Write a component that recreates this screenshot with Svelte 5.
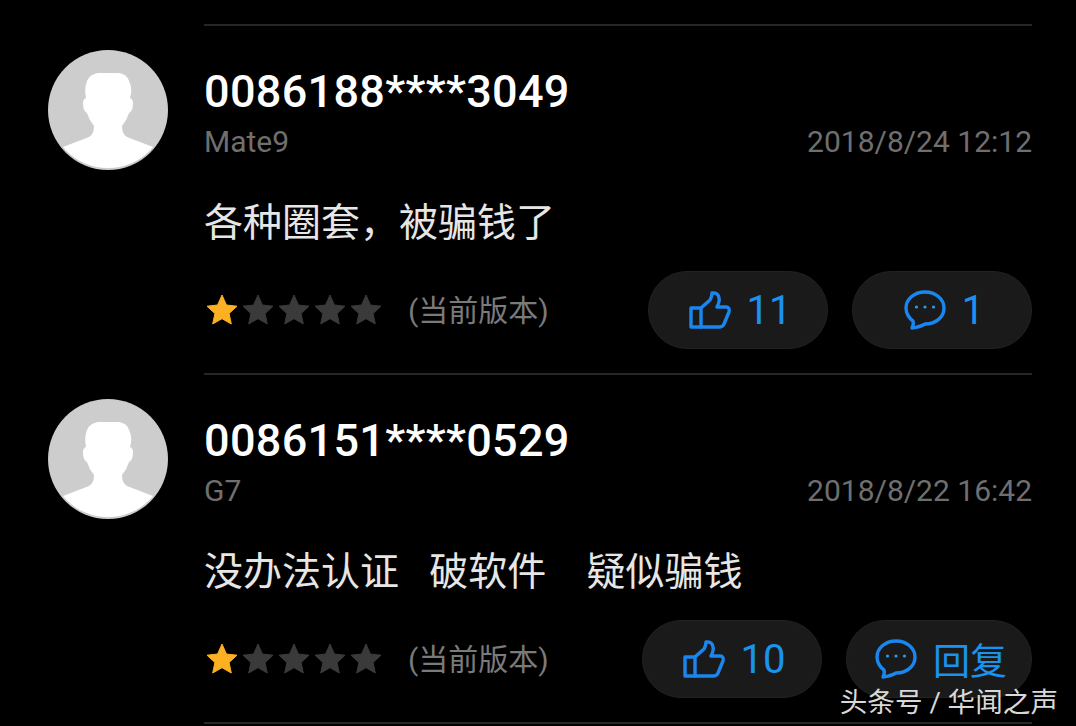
<script lang="ts">
  const reviews = [
    { name: "0086188****3049", device: "Mate9", date: "2018/8/24 12:12", text: "各种圈套，被骗钱了", likes: "11", reply: "1", replyCjk: false },
    { name: "0086151****0529", device: "G7", date: "2018/8/22 16:42", text: "没办法认证   破软件    疑似骗钱", likes: "10", reply: "回复", replyCjk: true },
  ];
  const stars = [0, 1, 2, 3, 4];
</script>

<div class="page">
  {#each reviews as r}
    <div class="review">
      <div class="avatar">
        <svg viewBox="0 0 120 120" width="120" height="120">
          <circle cx="60" cy="60" r="60" fill="#cdcdcd" />
          <path
            d="M15 97 L41 87 Q46 84 46 76 Q41 70 39 63 Q35 61 35 53 Q35 49 38 48 Q36 38 39 31 Q42 24 50 23 L71 23 Q79 24 81 31 Q85 38 82 48 Q85 49 85 53 Q85 61 81 63 Q79 70 74 76 Q74 84 79 87 L105 97 A58.500 58.500 0 0 1 15 97 Z"
            fill="#fff"
          />
        </svg>
      </div>
      <div class="body">
        <div class="name">{r.name}</div>
        <div class="meta">
          <span>{r.device}</span>
          <span>{r.date}</span>
        </div>
        <p class="text">{r.text}</p>
        <div class="foot">
          <div class="stars">
            {#each stars as i}
              <svg viewBox="0 0 36 36" width="36" height="36">
                <path
                  d="M18 3 L22.400 13 L33 14.200 L25.100 21.500 L27.300 32 L18 26.700 L8.700 32 L10.900 21.500 L3 14.200 L13.600 13 Z"
                  fill={i === 0 ? "#fdb022" : "#3a3a3a"}
                  stroke={i === 0 ? "#fdb022" : "#3a3a3a"}
                  stroke-width="1"
                  stroke-linejoin="round"
                />
              </svg>
            {/each}
          </div>
          <span class="version">(当前版本)</span>
          <div class="actions">
            <button class="pill">
              <svg viewBox="0 0 42 38" width="42" height="38" fill="none" stroke="#1a86f0" stroke-width="3.4" stroke-linejoin="round" stroke-linecap="round">
                <path d="M2 17 H12 V36 H2 Z" />
                <path d="M12 17 L21 9 Q23 6 23 2 Q29 1 30 7 Q31 10 28 16 H37 Q41 16 40 21 L35 33 Q34 36 30 36 H12" />
              </svg>
              <span class="count">{r.likes}</span>
            </button>
            <button class="pill">
              <svg viewBox="0 0 42 40" width="42" height="40">
                <path d="M21 2 C10 2 2 9.500 2 18 C2 24 6 29 9 31 Q10 34 8 38 Q16 37 21 34 C32 34 40 27 40 18 C40 9.500 32 2 21 2 Z" fill="none" stroke="#1a86f0" stroke-width="3.400" stroke-linejoin="round" />
                <circle cx="12.500" cy="17" r="1.600" fill="#2b9be8" />
                <circle cx="21" cy="17" r="1.600" fill="#2b9be8" />
                <circle cx="29.500" cy="17" r="1.600" fill="#2b9be8" />
              </svg>
              <span class="count" class:cjk={r.replyCjk}>{r.reply}</span>
            </button>
          </div>
        </div>
      </div>
    </div>
  {/each}
  <div class="rule"></div>
  <div class="watermark">头条号 / 华闻之声</div>
</div>

<style>
  :global(body) {
    margin: 0;
    background: #000;
  }

  .page {
    position: relative;
    width: 1076px;
    height: 726px;
    overflow: hidden;
    background: #000;
    padding-top: 24px;
    box-sizing: border-box;
    font-family: Roboto, "Noto Sans CJK SC", sans-serif;
  }

  .review {
    display: flex;
    height: 349px;
    box-sizing: border-box;
    padding: 0 44px 0 48px;
    gap: 36px;
  }

  .avatar {
    width: 120px;
    height: 120px;
    margin-top: 26px;
    flex: none;
  }
  .avatar svg {
    display: block;
  }

  .body {
    flex: 1;
    border-top: 2px solid #262626;
    min-width: 0;
  }

  .rule {
    height: 2px;
    margin: 0 44px 0 204px;
    background: #262626;
  }

  .name {
    margin-top: 41px;
    font-size: 45px;
    letter-spacing: 0.3px;
    line-height: 50px;
    font-weight: 500;
    color: #fff;
  }

  .meta {
    display: flex;
    justify-content: space-between;
    margin-top: 5px;
    font-size: 30px;
    line-height: 40px;
    color: #6f6f6f;
  }

  .text {
    margin: 36px 0 0;
    font-size: 39px;
    line-height: 50px;
    word-spacing: 0.4px;
    white-space: pre;
    color: #e6e6e6;
  }

  .foot {
    display: flex;
    align-items: center;
    margin-top: 23px;
  }

  .stars {
    display: flex;
    flex: none;
  }
  .stars svg {
    display: block;
  }

  .version {
    margin-left: 24px;
    padding-bottom: 4px;
    font-size: 30px;
    color: #7a7a7a;
  }

  .actions {
    display: flex;
    gap: 24px;
    margin-left: auto;
  }

  .pill {
    min-width: 180px;
    height: 78px;
    box-sizing: border-box;
    display: flex;
    align-items: center;
    justify-content: center;
    gap: 16px;
    padding: 0 24px 0 28px;
    font: inherit;
    background: #1a1a1a;
    border: 1px solid #222;
    border-radius: 39px;
  }
  .pill svg {
    flex: none;
  }

  .count {
    font-size: 40px;
    color: #1a93f0;
  }
  .count.cjk {
    font-size: 37px;
  }

  .watermark {
    position: absolute;
    right: 18px;
    bottom: 5px;
    font-size: 27.6px;
    line-height: 36px;
    color: #d8d8d8;
  }
</style>
